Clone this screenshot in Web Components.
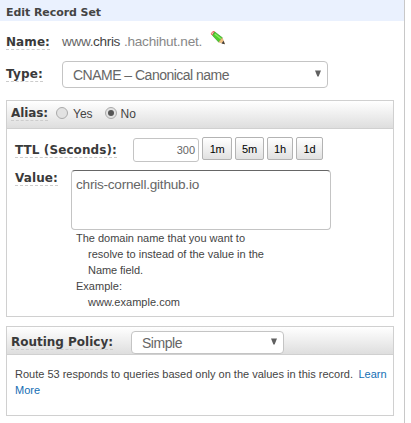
<!DOCTYPE html>
<html lang="en"><head><meta charset="utf-8"><title>Edit Record Set</title>
<style>
html,body{margin:0;background:#fff}
body{font-family:"Liberation Sans",Arial,sans-serif;color:#444}
</style></head><body>
<record-editor></record-editor>
<script>
const define=(name,html,setup)=>{
  const t=document.createElement('template');t.innerHTML=html;
  customElements.define(name,class extends HTMLElement{
    constructor(){super();this.attachShadow({mode:'open'}).append(t.content.cloneNode(true));}
    connectedCallback(){if(setup)setup.call(this,this.shadowRoot);}
  });
};

/* Single line of text, tracked so that it fills the width given in "w". */
define('fit-text',`<style>:host{display:inline-block;white-space:pre;flex:none}span{display:inline-block}</style><span><slot></slot></span>`,
function(r){
  const s=r.querySelector('span'),w=+this.getAttribute('w');
  this.style.width=w+'px';
  s.style.letterSpacing=(w-s.getBoundingClientRect().width)/this.textContent.length+'px';
});

define('field-label',`<style>:host{display:block;flex:none;height:17px;border-bottom:1px dashed #ccc;box-sizing:border-box;
font:bold 12px/18px "DejaVu Sans",Verdana,sans-serif;color:#3a3a3a}</style><slot></slot>`);

define('select-box',`<style>:host{display:flex;flex:none;box-sizing:border-box;align-items:center;justify-content:space-between;
border:1px solid #c4c4c4;border-radius:4px;background:#fff;padding:0 6px 0 10px;font-size:14px;color:#666}
svg{display:block;flex:none;margin-top:-2px}</style><slot></slot><svg width="6" height="7"><path d="M0 0.5H6L3.6 6.5H2.4Z" fill="#606060"/></svg>`);

define('radio-dot',`<style>:host{display:block;flex:none;width:12px;height:12px}svg{display:block}.d{display:none}:host([checked]) .d{display:block}</style>
<svg width="12" height="12"><circle cx="6" cy="6" r="5.5" fill="#e2e2e2" stroke="#aaa"/><circle class="d" cx="6" cy="6" r="3" fill="#555"/></svg>`);

define('ttl-button',`<style>:host{display:flex;flex:none;box-sizing:border-box;height:23px;justify-content:center;align-items:center;
border:1px solid #b3b3b3;border-radius:2px;background:linear-gradient(#fff,#e1e1e1);font-size:11px;color:#000}</style><slot></slot>`);

define('pencil-icon',`<style>:host{display:block;flex:none;width:16px;height:16px}svg{display:block}</style>
<svg width="16" height="16" viewBox="0 0 16 16"><path d="M1.4 3.4 2.8 1.6 4.6 1.7 2.6 5 1.6 4.6Z" fill="#f7c4c0" stroke="#dc4438" stroke-width=".8"/>
<path d="M4.8 2 12.4 7.8 8.8 12.2 2.6 5.6Z" fill="#4fce2d" stroke="#3aa02a" stroke-width=".7"/><path d="M4.8 3.9 10.8 8.8" stroke="#8cec66" stroke-width="1.3"/>
<path d="M12.2 7.9 14.6 13.8 8.9 12.1Z" fill="#f1c183" stroke="#d6a468" stroke-width=".6"/><path d="M13.5 10.8 14.9 14.2 11.6 13.6Z" fill="#3d3d3d"/></svg>`);

define('group-box',`<style>:host{display:block;box-sizing:border-box;border:1px solid #d0d0d0;background:#fff}
header{box-sizing:border-box;display:flex;align-items:flex-start;height:28px;border-bottom:1px solid #d0d0d0;background:linear-gradient(#fff,#dedede);padding-left:4px}</style>
<header><slot name="head"></slot></header><slot></slot>`);

define('record-editor',`<style>
:host{display:block;box-sizing:border-box;width:405px;height:423px;border-right:1px solid #c8c8c8;background:#fff;overflow:hidden}
h1{margin:0;height:21px;background:#eaf1fe;padding-left:6px;font:bold 11px/25px "DejaVu Sans",Verdana,sans-serif;color:#444;box-sizing:border-box}
h1 fit-text{display:block}
.row{display:flex;align-items:flex-start;box-sizing:border-box}
.name{height:28px;padding:12px 0 0 6px;font-size:13.6px;line-height:18px}
.domain{color:#888}
.www{color:#666}
.type{height:39px;padding:12px 0 0 6px}
.type field-label{margin-top:4px}
.type select-box{width:266px;height:27px;margin-left:19px}
group-box{width:388px;margin-left:6px}
.alias{height:217px}
.policy{height:90px;margin-top:9px}
.h{display:flex;align-items:flex-start}
.opt{font-size:12px;line-height:16px}
.ttl{height:41px;padding:8px 0 0 8px}
.ttl field-label{margin-top:4px}
.num{box-sizing:border-box;width:66px;height:24px;margin:1px 3px 0 16px;border:1px solid #c4c4c4;border-radius:3px;font-size:11px;line-height:23px;color:#666;padding-right:3px;text-align:right}
ttl-button{margin-right:3px}
.val{padding-left:8px;height:60px}
.val field-label{margin-top:-1px}
.area{box-sizing:border-box;width:260px;height:60px;margin-left:13px;border:1px solid #c4c4c4;border-top-color:#666;border-radius:4px;padding:5px 0 0 4px;font-size:13.6px;line-height:18px;color:#666}
.help{padding:0 0 0 69px;font-size:11px;line-height:16px}
.help fit-text,.route fit-text{display:block}.in{margin-left:12px}
.route{padding:11px 0 0 8px;font-size:11px;line-height:16px}
a{color:#146eb4;text-decoration:none}
.l{display:flex}
</style>
<h1><fit-text w="95">Edit Record Set</fit-text></h1>
<div class="row name"><field-label><fit-text w="44">Name:</fit-text></field-label>
<fit-text w="58" style="margin-left:12px"><span class="www">www.</span>chris</fit-text><fit-text class="domain" w="78" style="margin-left:4px">.hachihut.net.</fit-text>
<pencil-icon style="margin:-3px 0 0 8px"></pencil-icon></div>
<div class="row type"><field-label><fit-text w="37">Type:</fit-text></field-label>
<select-box><fit-text w="156">CNAME – Canonical name</fit-text></select-box></div>
<group-box class="alias" style="margin-top:12px">
<div slot="head" class="h"><field-label style="margin-top:3px"><fit-text w="37">Alias:</fit-text></field-label>
<radio-dot style="margin:6px 5px 0 8px"></radio-dot><fit-text class="opt" style="margin-top:5px" w="19.5">Yes</fit-text>
<radio-dot checked style="margin:6px 4px 0 12px"></radio-dot><fit-text class="opt" style="margin-top:5px" w="15.5">No</fit-text></div>
<div class="row ttl"><field-label><fit-text w="102">TTL (Seconds):</fit-text></field-label>
<div class="num"><fit-text w="18.3">300</fit-text></div>
<ttl-button style="width:30px"><fit-text w="14.5">1m</fit-text></ttl-button><ttl-button style="width:29px"><fit-text w="15">5m</fit-text></ttl-button><ttl-button style="width:26px"><fit-text w="12">1h</fit-text></ttl-button><ttl-button style="width:27px"><fit-text w="12">1d</fit-text></ttl-button></div>
<div class="row val"><field-label><fit-text w="43">Value:</fit-text></field-label>
<div class="area"><fit-text w="123">chris-cornell.github.io</fit-text></div></div>
<div class="help"><fit-text w="169">The domain name that you want to</fit-text>
<fit-text class="in" w="176">resolve to instead of the value in the</fit-text>
<fit-text class="in" w="55">Name field.</fit-text><fit-text w="46">Example:</fit-text><fit-text class="in" w="92">www.example.com</fit-text></div>
</group-box>
<group-box class="policy"><div slot="head" class="h"><field-label style="margin-top:6px"><fit-text w="102">Routing Policy:</fit-text></field-label>
<select-box style="width:153px;height:23px;margin:4px 0 0 18px"><fit-text w="40">Simple</fit-text></select-box></div>
<div class="route"><div class="l"><fit-text w="338">Route 53 responds to queries based only on the values in this record.</fit-text><a style="margin-left:5.5px"><fit-text w="28">Learn</fit-text></a></div>
<a><fit-text w="25">More</fit-text></a></div></group-box>`);
</script></body></html>
